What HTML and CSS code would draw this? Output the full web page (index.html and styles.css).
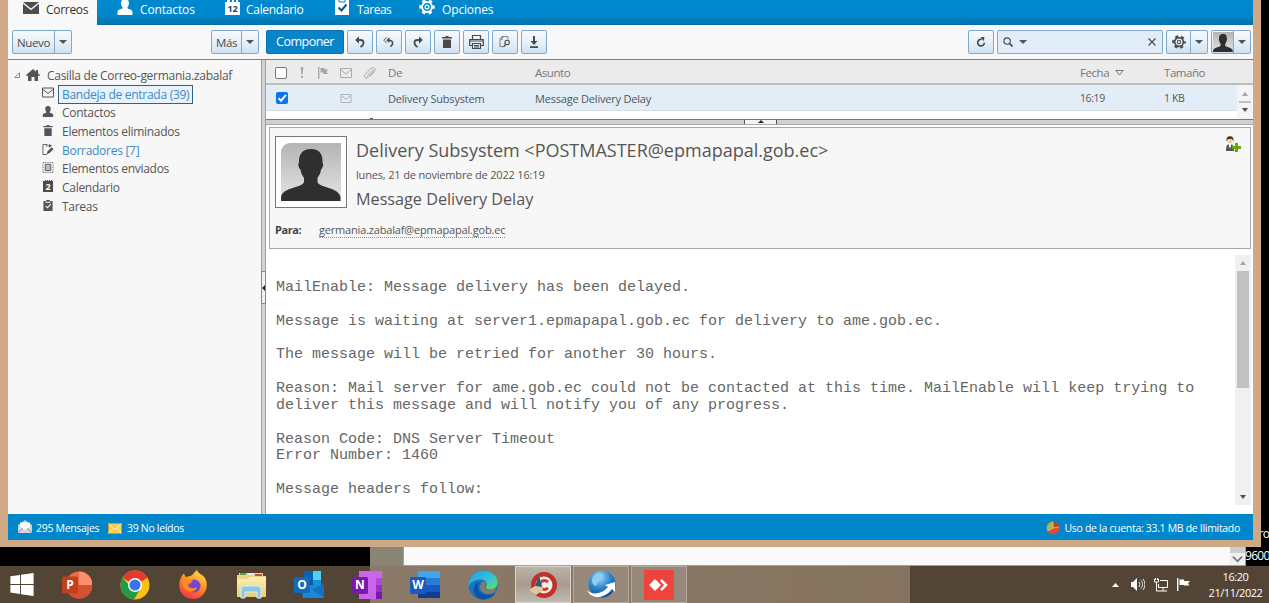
FILE: index.html
```html
<!DOCTYPE html>
<html lang="es">
<head>
<meta charset="utf-8">
<title>Correos</title>
<link rel="stylesheet" href="styles.css">
</head>
<body>
<svg class="defs" aria-hidden="true">
  <defs>
    <linearGradient id="av" x1="0" y1="0" x2="0" y2="1"><stop offset="0" stop-color="#b4b4b4"/><stop offset="1" stop-color="#e4e4e4"/></linearGradient>
    <linearGradient id="edge1" x1="0" y1="0" x2="1" y2="1"><stop offset="0" stop-color="#1b9de2"/><stop offset=".6" stop-color="#37c6d0"/><stop offset="1" stop-color="#6be04a"/></linearGradient>
    <radialGradient id="globe" cx=".4" cy=".25" r=".8"><stop offset="0" stop-color="#a9dcfa"/><stop offset=".5" stop-color="#2c88cf"/><stop offset="1" stop-color="#0c4687"/></radialGradient>
    <linearGradient id="fox" x1=".8" y1="0" x2=".3" y2="1"><stop offset="0" stop-color="#ffe14a"/><stop offset=".5" stop-color="#ff8a1e"/><stop offset="1" stop-color="#f4324f"/></linearGradient>
    <linearGradient id="folder" x1="0" y1="0" x2="0" y2="1"><stop offset="0" stop-color="#fbf0b4"/><stop offset="1" stop-color="#e9cd6c"/></linearGradient>
    <symbol id="mail" viewBox="0 0 12 10"><path d="M.5.5h11v9H.5zM.5 1.500 6 6l5.500-4.500" fill="none" stroke="currentColor"/></symbol>
    <symbol id="person" viewBox="0 0 12 12"><path d="M6 0c2.200 0 3 1.400 3 3.200C9 4.800 8 6.300 7.600 6.700c.4.800 4 .9 4 3V12H.4V9.700c0-2.100 3.600-2.200 4-3C4 6.300 3 4.800 3 3.200 3 1.400 3.800 0 6 0z" fill="currentColor"/></symbol>
    <symbol id="trash" viewBox="0 0 12 12"><path d="M1 1h3.500V0h3v1H11v1.500H1zM2 3.500h8V12H2z" fill="currentColor"/></symbol>
    <symbol id="gear" viewBox="0 0 16 16"><circle cx="8" cy="8" r="6.600" fill="none" stroke="currentColor" stroke-width="2.400" stroke-dasharray="3.400 3.510" stroke-dashoffset="1.700"/><circle cx="8" cy="8" r="5" fill="none" stroke="currentColor" stroke-width="1.900"/><circle cx="8" cy="8" r="1.900" fill="none" stroke="currentColor" stroke-width="1.200"/></symbol>
    <symbol id="reply" viewBox="0 0 12 12"><path d="M1.200 4 5 .3v7.400z" fill="currentColor"/><path d="M4 4h2.500C10.800 4.200 10.300 8.800 6.500 11" fill="none" stroke="currentColor" stroke-width="1.800"/></symbol>
    <symbol id="face" viewBox="0 0 60 59" preserveAspectRatio="none"><path fill="url(#av)" d="M0 0h60v59H0z"/><path d="M30 6c9 0 12 6 11.500 14 1.500 1 0 6-1.500 7-.5 5-3 7-3.500 9v4c3 6 21 5 23 15v4H0v-4c2-10 20-9 23-15v-4c-.5-2-3-4-3.500-9-1.500-1-3-6-1.500-7C17.500 12 21 6 30 6z" fill="#2f2f2f"/></symbol>
  </defs>
</svg>
<div class="desktop">
  <div class="watermark"><span class="edition">Pro</span><span class="build">9600</span></div>
  <div class="window">
    <nav class="tabs">
      <div class="tab active"><svg class="t-mail" viewBox="0 0 16 12"><path d="M0 0h16L8 6.500zM0 1.800l8 6.500 8-6.500V12H0z" fill="#4c4c4c"/></svg><span class="t1">Correos</span></div>
      <div class="tab c2"><svg class="t-person"><use href="#person"/></svg><span class="t2">Contactos</span></div>
      <div class="tab c3"><span class="cal-icon">12</span><span class="t3">Calendario</span></div>
      <div class="tab c4"><svg class="t-task" viewBox="0 0 14 17"><path d="M0 2h14v15H0z" fill="#fff"/><path d="M4 0h6v4H4z" fill="#fff" stroke="#0086cb"/><path d="m3.500 9.500 3 3 5-6" fill="none" stroke="#0b5a8c" stroke-width="2"/></svg><span class="t4">Tareas</span></div>
      <div class="tab c5"><svg class="t-gear"><use href="#gear"/></svg><span class="t5">Opciones</span></div>
    </nav>
    <div class="toolbar">
      <div class="btn nuevo"><span class="lab">Nuevo</span><span class="drop"><i class="caret"></i></span></div>
      <div class="btn mas"><span class="lab">Más</span><span class="drop"><i class="caret"></i></span></div>
      <div class="tools">
        <div class="compose">Componer</div>
        <div class="btn"><svg class="i12"><use href="#reply"/></svg></div>
        <div class="btn"><svg class="i12" viewBox="0 0 13 12"><path d="M3.500 4 7 .8v6.400z" fill="currentColor"/><path d="M6 4c5 0 6 4 2 7" fill="none" stroke="currentColor" stroke-width="1.600"/><path d="M4 .8.800 4 4 7.200" fill="none" stroke="currentColor"/></svg></div>
        <div class="btn"><svg class="i12 flip"><use href="#reply"/></svg></div>
        <div class="btn"><svg class="i12"><use href="#trash"/></svg></div>
        <div class="btn"><svg class="i15" viewBox="0 0 15 14"><path d="M3.500 4V.5h8V4M3 10.500H.7v-6h13.600v6H12M3.500 8.500h8v5h-8z" fill="none" stroke="currentColor" stroke-width="1.200"/><path d="M1 6h13M5 10.500h5M5 12h5" stroke="currentColor"/></svg></div>
        <div class="btn"><svg class="i12" viewBox="0 0 13 14"><path d="M5 12.500H.7V3L3 .7h7V4M3.500.7v3h-3" fill="none" stroke="currentColor" stroke-dasharray="2 .6"/><circle cx="9" cy="7.500" r="2.600" fill="none" stroke="currentColor" stroke-width="1.300"/><path d="M7.500 9.500 5 12.500" stroke="currentColor" stroke-width="1.600"/></svg></div>
        <div class="btn"><svg class="i12" viewBox="0 0 12 12"><path d="M5 0h2v5h2.500L6 9 2.500 5H5zM2 10.300h8V12H2z" fill="currentColor"/></svg></div>
      </div>
      <div class="right-tools">
        <div class="btn"><svg class="i10" viewBox="0 0 12 12"><path d="M7 2.800a4 4 0 1 0 3 4" fill="none" stroke="currentColor" stroke-width="2"/><path d="M5.500 0H10l-.5 5z" fill="currentColor"/></svg></div>
        <div class="search"><svg class="i10" viewBox="0 0 11 11"><circle cx="4.500" cy="4.500" r="3.500" fill="none" stroke="currentColor" stroke-width="1.200"/><path d="m7 7 3.500 3.500" stroke="currentColor" stroke-width="1.800"/></svg><i class="caret"></i><svg class="clear" viewBox="0 0 8 8"><path d="m.5.500 7 7m0-7-7 7" stroke="currentColor" stroke-width="1.200"/></svg></div>
        <div class="btn split"><svg class="i14"><use href="#gear"/></svg><span class="drop"><i class="caret"></i></span></div>
        <div class="btn split user"><svg class="mini"><use href="#face"/></svg><span class="drop"><i class="caret"></i></span></div>
      </div>
    </div>
    <div class="body">
      <aside class="tree">
        <div class="node root"><svg class="tri" viewBox="0 0 6 6"><path d="M5.500.7v4.800H.7z" fill="none" stroke="#888"/></svg><svg class="home" viewBox="0 0 14 12"><path d="M7 0l3 2.700V1h2v3.300L14 6v.700h-2V12H8.500V8h-3v4H2V6.700H0V6z" fill="currentColor"/></svg><span class="n0">Casilla de Correo-germania.zabalaf</span></div>
        <div class="node"><svg><use href="#mail"/></svg><span class="sel">Bandeja de entrada (39)</span></div>
        <div class="node"><svg><use href="#person"/></svg><span>Contactos</span></div>
        <div class="node"><svg><use href="#trash"/></svg><span>Elementos eliminados</span></div>
        <div class="node blue"><svg viewBox="0 0 12 12"><path d="M5 11.500H.5V.5h4.500l2 2M4.500.500V3" fill="none" stroke="currentColor"/><path d="m4.500 11 1-3 4.500-4.500L12 5.500 7.500 10zM7 0v4l3.500-2z" fill="currentColor"/></svg><span>Borradores [7]</span></div>
        <div class="node"><svg viewBox="0 0 12 12"><path d="M.5.500h11v11H.5z" fill="none" stroke="currentColor" stroke-dasharray="1 1"/><path d="M3 2.500h6v7H3z" fill="#bbb" stroke="currentColor"/></svg><span>Elementos enviados</span></div>
        <div class="node"><span class="mini-cal">2</span><span>Calendario</span></div>
        <div class="node"><svg viewBox="0 0 12 12"><path d="M1 1h10v11H1zM4 0h4v2H4z" fill="currentColor"/><path d="M4 1.500v1h4v-1M3.500 6.500l2 2L9 4.500" fill="none" stroke="#fff" stroke-width="1.200"/></svg><span>Tareas</span></div>
      </aside>
      <div class="vsplit"><span><i></i></span></div>
      <main class="main">
        <div class="list-head">
          <i class="check"></i>
          <svg class="h-bang" viewBox="0 0 4 11"><path d="M.7 0h2.600L2.700 7.500H1.300zM1 9h2v2H1z" fill="#a9a9a9"/></svg>
          <svg class="h-flag" viewBox="0 0 10 12"><path d="M.7 0v12" stroke="#aaa" stroke-width="1.400"/><path d="M2.500 1h4v1.500H10L8.500 5 10 7H5.500V5.500h-3z" fill="#a5a5a5"/></svg>
          <svg class="h-mail"><use href="#mail"/></svg>
          <svg class="h-clip" viewBox="0 0 13 12"><path d="M3.500 9.500 9 3.500c1-1 2.200.2 1.200 1.200L5 10.300c-2 2-5-.5-3.200-2.600L8 1.500c2.500-2.300 5.500.5 3.500 3L7 9.500" fill="none" stroke="#aaa"/></svg>
          <span class="col-de">De</span><span class="col-as">Asunto</span><span class="col-fe"><span>Fecha</span><svg viewBox="0 0 9 6"><path d="M.8.500h7.400L4.500 5z" fill="none" stroke="#777"/></svg></span><span class="col-ta">Tamaño</span>
        </div>
        <div class="rows">
          <div class="rows-in">
            <div class="row">
              <i class="check on"><svg viewBox="0 0 12 12"><path d="m2.500 6.300 2.500 2.500 5-6" fill="none" stroke="#fff" stroke-width="2"/></svg></i>
              <svg class="r-mail"><use href="#mail"/></svg>
              <span class="col-de">Delivery Subsystem</span><span class="col-as">Message Delivery Delay</span><span class="col-fe tight">16:19</span><span class="col-ta tight">1 KB</span>
            </div>
            <i class="dash"></i>
          </div>
          <div class="mini-scroll"><i class="up"></i><i class="bar"></i><i class="down"></i></div>
        </div>
        <div class="hsplit"><span><i></i></span></div>
        <section class="reader">
          <header class="card">
            <div class="top">
              <div class="photo"><svg><use href="#face"/></svg></div>
              <div class="who">
                <div class="from">Delivery Subsystem &lt;POSTMASTER@epmapapal.gob.ec&gt;</div>
                <div class="date">lunes, 21 de noviembre de 2022 16:19</div>
                <div class="subject">Message Delivery Delay</div>
              </div>
              <svg class="add" viewBox="0 0 16 16"><path d="M1 15c0-5 1-7 4-7s4 2 4 7z" fill="#555"/><path d="m3.500 8 1.500 5 1.500-5z" fill="#fff"/><circle cx="5" cy="4.500" r="3" fill="#f3d3a4"/><path d="M1.500 5C1 1.500 3 .2 5 .2S9 1.500 8.500 5L7 3H3z" fill="#4b3424"/><path d="M10 7h3v3h3v3h-3v3h-3v-3H7v-3h3z" fill="#69a51b"/></svg>
            </div>
            <div class="to"><b>Para:</b><span class="addr">germania.zabalaf@epmapapal.gob.ec</span></div>
          </header>
          <div class="message">
<pre>MailEnable: Message delivery has been delayed.

Message is waiting at server1.epmapapal.gob.ec for delivery to ame.gob.ec.

The message will be retried for another 30 hours.

Reason: Mail server for ame.gob.ec could not be contacted at this time. MailEnable will keep trying to
deliver this message and will notify you of any progress.

Reason Code: DNS Server Timeout
Error Number: 1460

Message headers follow:</pre>
            <div class="scroll"><i class="up"></i><i class="thumb"></i><i class="down"></i></div>
          </div>
        </section>
      </main>
    </div>
    <footer class="status">
      <svg class="s-open" viewBox="0 0 14 13"><path d="M0 5 7 0l7 5v8H0z" fill="#c7ced4"/><path d="M2 2.500h10V8l-5 2-5-2z" fill="#fff"/><path d="M0 5.500 7 10l7-4.500V13H0z" fill="#cfd6dc"/><path d="m0 12.500 5-4m9 4-5-4" stroke="#8d98a2"/></svg>
      <span class="s1">295 Mensajes</span>
      <svg class="s-closed" viewBox="0 0 14 11"><path d="M0 0h14v11H0z" fill="#f7cd53"/><path d="m0 .5 7 6 7-6M0 10.500l5-5m9 5-5-5" fill="none" stroke="#fff2bd"/><path d="M.5.5h13v10H.5z" fill="none" stroke="#d69b25"/></svg>
      <span>39 No leídos</span>
      <svg class="s-pie" viewBox="0 0 14 14"><circle cx="7" cy="7" r="6.500" fill="#d9502f"/><path d="M7 7V.500A6.500 6.500 0 0 0 1.500 10z" fill="#9cbb55"/><path d="M7 7V.500A6.500 6.500 0 0 1 13.400 6z" fill="#b9472c"/><path d="M7 7 1.500 10M7 7l6-1M7 7V1" stroke="#f3c7a5" stroke-width=".7"/></svg>
      <span>Uso de la cuenta: 33.1 MB de Ilimitado</span>
    </footer>
  </div>
  <div class="behind"><div class="pane"></div><div class="sheet"><div class="arrow-box"><svg viewBox="0 0 12 7"><path d="m1 1 5 5 5-5" fill="none" stroke="#777" stroke-width="2"/></svg></div></div></div>
  <div class="taskbar">
    <div class="app"><svg viewBox="0 0 30 30"><path d="m3 6.500 10-1.400v9.300H3zM14 5l13-2v11.400H14zM3 15.500h10v9.300L3 23.400zM14 15.500h13V27l-13-2z" fill="#fff"/></svg></div>
    <div class="app"><svg viewBox="0 0 30 30"><circle cx="17" cy="15" r="13.500" fill="#ed6c47"/><path d="M17 1.500A13.500 13.500 0 0 1 30.500 15H17z" fill="#ff8f6b"/><path d="M3.500 15h27a13.500 13.500 0 0 1-27 0z" fill="#d35230"/><rect y="6.500" width="16" height="17" rx="1.500" fill="#c43e1c"/></svg><b>P</b></div>
    <div class="app"><svg viewBox="0 0 30 30"><circle cx="15" cy="15" r="14.500" fill="#fbc116"/><path d="M15 15 2.400 7.700A14.500 14.500 0 0 1 27.600 7.700z" fill="#e33b2e"/><path d="M2.400 7.700A14.500 14.500 0 0 0 14 29.500l6.600-11.200L15 15H9z" fill="#229a48"/><circle cx="15" cy="15" r="7" fill="#fff"/><circle cx="15" cy="15" r="5.600" fill="#3378e6"/></svg></div>
    <div class="app"><svg viewBox="0 0 30 30"><path d="M19 0c1 4 6 4 8.500 9 4 9-2 20-12.500 20C5 29 0 21 1.500 12 2 9 4 5 6 3.500L7.500 7l5-1C15 5 16 2 19 0z" fill="url(#fox)"/><circle cx="16" cy="16" r="6.500" fill="#7545d6"/><path d="M5 10c3-2 7 0 10 1-1 2-4 2-5 4 1 4 6 4 9 2-1 6-11 7-14-1z" fill="#ff8a1e"/></svg></div>
    <div class="app"><svg viewBox="0 0 30 30"><path d="M1 5h2V3h9v2h4V3h11v3h3v20H1z" fill="#ecd48a"/><path d="M4 3h6v2H4z" fill="#5ba33f"/><path d="M12 3h6v2h-6z" fill="#e6efe8"/><path d="M19 4h7v2h-7z" fill="#c65138"/><path d="M1 9h11l2-2h16v20H1z" fill="url(#folder)"/><path d="M5 28v-9c0-2 2-3 4-3h12c2 0 4 1 4 3v9h-4v-6H9v6z" fill="#8dc6e5" stroke="#d7eef9"/></svg></div>
    <div class="app"><svg viewBox="0 0 30 30"><path d="M10 1h17v18H10z" fill="#1490df"/><path d="M10 1h9v9h-9z" fill="#0a62b5"/><path d="M19 1h8v9h-8z" fill="#50d0f7"/><path d="M10 10h9v8h-9z" fill="#0b58a3"/><path d="M7 15h23v13H9z" fill="#1a87d8"/><path d="m7 15 23 13V15L18 21z" fill="#28a9ea"/><path d="M30 14v14L17 20z" fill="#1471bf"/><rect y="7" width="16" height="16" rx="1.500" fill="#0f6cbd"/></svg><b>O</b></div>
    <div class="app"><svg viewBox="0 0 30 30"><path d="M7 1h23v28H7z" fill="#ca64ea"/><path d="M24 8h6v7h-6z" fill="#ae4bd5"/><path d="M24 15h6v7h-6z" fill="#9332bf"/><path d="M24 22h6v7h-6z" fill="#7719aa"/><rect y="7" width="16" height="17" rx="1.500" fill="#7719aa"/></svg><b>N</b></div>
    <div class="app"><svg viewBox="0 0 30 30"><path d="M8 1h22v7H8z" fill="#41a5ee"/><path d="M8 8h22v7H8z" fill="#2b7cd3"/><path d="M8 15h22v7H8z" fill="#185abd"/><path d="M8 22h22v6H8z" fill="#103f91"/><rect y="7" width="16" height="17" rx="1.500" fill="#185abd"/></svg><b>W</b></div>
    <div class="app"><svg viewBox="0 0 30 30"><circle cx="15" cy="15" r="14.500" fill="#1573c4"/><path d="M.6 14C2 5 8 .5 15 .5c9 0 14.500 6 14.500 12 0 5-4 7-7.500 7-3 0-5-1-4-2.500 2-3 0-7.500-5-7.500C7 9.500 2 12 .6 17z" fill="url(#edge1)"/><path d="M12 12c-4 3-3 12 7 13 4 .3 7-1 8.500-2C25 27 20 29.500 15 29.500 8 29 5 23 6 18c1-4 3-6 6-6z" fill="#0c53a2"/><path d="M17 17c1.500-2 1-4-1-6l-3 2-1 4c0 4 4 7 8 7 3 0 6-1 7-3l2-5c-2 3-4 3.500-7 3.500s-6-.5-5-2.500z" fill="#8b7a68"/></svg></div>
    <div class="app task current"><svg viewBox="0 0 30 30"><circle cx="16" cy="15" r="13" fill="#c22f27"/><circle cx="16" cy="15" r="8.500" fill="#f1eee9"/><path d="M20 12c-4-3-8-1-8 3s4 6 8 3" fill="none" stroke="#d13a31" stroke-width="3"/><path d="m11 5-1 9-9 6 7 5 7-5z" fill="#dfc7a0"/><path d="m11 5-4 11 7 1z" fill="#2b5c7c"/></svg></div>
    <div class="app task"><svg viewBox="0 0 30 30"><circle cx="16" cy="14" r="13.500" fill="url(#globe)"/><path d="M10 4c5-2 8 0 7 3s-5 3-6 7-5 0-5-3 1-5 4-7z" fill="#8ecdf2"/><path d="M1 20c4 5 14 5 21-3l-3-2 10-3v10l-3-3C19 29 5 30 1 20z" fill="#fff"/></svg></div>
    <div class="app task"><svg viewBox="0 0 30 30"><path d="M0 0h30v30H0z" fill="#ef443b"/><path d="m11 9 6 6-6 6-6-6z" fill="#fff"/><path d="m17 10 5 5-5 5" fill="none" stroke="#fff" stroke-width="2.500"/></svg></div>
    <div class="tray">
      <svg class="y1" viewBox="0 0 7 4"><path d="M0 4 3.500 0 7 4z" fill="#fff"/></svg>
      <svg class="y2" viewBox="0 0 14 13"><path d="M0 4h2l4-4v13L2 9H0z" fill="#fff"/><path d="M8 4c1 1.500 1 3.500 0 5M10 2.500c2 2 2 6 0 8M12 1c2.500 3 2.500 8 0 11" fill="none" stroke="#eee"/></svg>
      <svg class="y3" viewBox="0 0 14 14"><path d="M6 2.500h7.500v7H4.500V6M9 10v3M5 13h8M.5 1v3h4V1M2.500 4v9H5M1.500 0v2M3.500 0v2" fill="none" stroke="#fff"/></svg>
      <svg class="y4" viewBox="0 0 13 13"><path d="M.7 0v13" stroke="#fff" stroke-width="1.400"/><path d="M2.500 1.500H7V3h6l-2 2.500 1.500 2H7V7H2.500z" fill="#fff"/></svg>
      <div class="clock"><span>16:20</span><span>21/11/2022</span></div>
    </div>
  </div>
</div>
</body>
</html>
```
FILE: styles.css
```css
* { box-sizing: border-box; }
body { margin: 0; background: #000; overflow: hidden; }
body, .desktop { font-family: "Open Sans", "Noto Sans", sans-serif; }
svg { display: block; flex: none; }
i { font-style: normal; display: block; flex: none; }
span, b { white-space: nowrap; }
.defs { position: absolute; width: 0; height: 0; }
.desktop { width: 1269px; height: 603px; position: relative; background: #000; display: flex; flex-direction: column; overflow: hidden; }
.watermark { position: absolute; left: 1245px; top: 523px; width: 24px; color: #fff; font-size: 12px; line-height: 22px; display: flex; flex-direction: column; letter-spacing: -.7px; z-index: 1; }
.edition { padding-left: 7px; }
.window { width: 1261px; height: 547px; border: solid #cfa986; border-width: 0 8px 7px; display: flex; flex-direction: column; position: relative; z-index: 2; flex: none; }

.tabs { height: 25px; background: linear-gradient(#0089ce, #0087cb 60%, #0070a9); display: flex; color: #fff; font-size: 12px; line-height: 19px; letter-spacing: -.15px; flex: none; }
.tab { display: flex; }
.tab.active { width: 89px; background: #f8f8f8; color: #333; padding-left: 15px; }
.active .t1 { margin-left: 7px; letter-spacing: -.3px; }
.t-mail { width: 16px; height: 12px; margin-top: 2px; }
.c2 { width: 117px; padding-left: 20px; }
.t-person { width: 16px; height: 16px; margin-top: -1px; }
.t2 { margin-left: 7px; }
.c3 { width: 121px; padding-left: 11px; }
.cal-icon { width: 15px; height: 15px; background: #fff; border-top: 2px dotted #0086cb; color: #124c70; font: bold 9px/13px "Open Sans", sans-serif; text-align: center; }
.t3 { margin-left: 6px; letter-spacing: -.3px; }
.c4 { width: 69px; }
.t-task { width: 14px; height: 17px; margin-top: -2px; }
.t4 { margin-left: 8px; letter-spacing: -.5px; }
.c5 { padding-left: 15px; }
.t-gear { width: 16px; height: 16px; margin-top: -1px; }
.t5 { margin-left: 7px; }

.toolbar { height: 35px; background: #f8f8f8; border-bottom: 1px solid #7d7d7d; padding: 5px 2px 0 4px; display: flex; flex: none; color: #4a4a4a; }
.btn { width: 26px; height: 24px; border: 1px solid #7eaacd; border-radius: 2px; background: linear-gradient(#f6fafd, #e6f0f9 50%, #cfe2f2); display: flex; align-items: center; justify-content: center; flex: none; font-size: 11.500px; letter-spacing: -.4px; }
.drop { width: 17px; align-self: stretch; border-left: 1px solid #7eaacd; display: flex; align-items: center; justify-content: center; }
.lab { flex: 1; text-align: center; padding-top: 1px; }
.caret { width: 0; height: 0; border: solid transparent; border-width: 4px 4px 0; border-top-color: #555; }
.nuevo { width: 60px; }
.mas { width: 48px; margin-left: 139px; }
.tools { display: flex; gap: 3px; margin-left: 7px; }
.compose { width: 78px; height: 24px; background: #0a84c8; border: 1px solid #0873ae; border-radius: 2px; color: #fff; font-size: 12.500px; letter-spacing: -.5px; line-height: 22px; text-align: center; }
.i12 { width: 12px; height: 12px; }
.i14 { width: 14px; height: 14px; }
.i15 { width: 15px; height: 14px; }
.i10 { width: 10px; height: 10px; }
.flip { transform: scaleX(-1); }
.right-tools { margin-left: auto; display: flex; gap: 3px; }
.search { width: 166px; height: 24px; border: 1px solid #7eaacd; border-radius: 2px; background: #e1eef9; display: flex; align-items: center; padding: 0 6px 0 5px; gap: 6px; }
.clear { width: 8px; height: 8px; margin-left: auto; }
.split { width: 42px; justify-content: space-between; padding-left: 5px; }
.user { width: 40px; padding-left: 1px; }
.mini { width: 20px; height: 20px; }

.body { height: 454px; display: flex; flex: none; }
.tree { width: 253px; background: #f7f7f7; padding: 6.600px 0 0 34px; color: #555; font-size: 12px; letter-spacing: -.28px; line-height: 18.750px; flex: none; }
.node { height: 18.750px; display: flex; }
.node > svg { width: 12px; height: 11px; margin: 2px 8px 0 0; }
.node.root { margin-left: -28px; }
.root > .tri { width: 6px; height: 6px; margin: 5px 6px 0 0; }
.root > .home { width: 14px; height: 12px; margin: 2px 7px 0 0; }
.node > .sel { height: 19px; margin: 0 0 0 -4px; padding: 0 3px; background: #e8f2fb; border: 1px solid #2f6286; color: #3c8ac4; line-height: 17px; }
.blue > span { color: #3c8ac4; }
.mini-cal { width: 10px; height: 12px; margin: 1px 9px 0 1px; background: #4c4c4c; color: #fff; font: bold 9px/12px "Open Sans", sans-serif; text-align: center; border-top: 1px dotted #f7f7f7; }
.vsplit { width: 5px; background: #d2d2d2; border: solid #a0a0a0; border-width: 0 1px; padding-top: 211px; flex: none; }
.vsplit span { display: flex; align-items: center; height: 33px; width: 5px; margin-left: -1px; background: #f0f0f0; border: 1px solid #888; }
.vsplit i { width: 0; height: 0; border: solid transparent; border-width: 3px 3px 3px 0; border-right-color: #222; }

.main { flex: 1; min-width: 0; background: #fff; display: flex; flex-direction: column; }
.list-head { height: 25px; background: #ebebeb; border-bottom: 2px solid #bcbcbc; display: flex; align-items: center; padding: 2px 0 0 9px; color: #777; font-size: 11.500px; letter-spacing: -.45px; flex: none; }
.check { width: 12px; height: 12px; border: 1px solid #777; border-radius: 2px; background: #fff; }
.check.on { background: #0a74e8; border: 0; }
.h-bang { width: 4px; height: 11px; margin-left: 13px; }
.h-flag { width: 10px; height: 12px; margin-left: 14px; }
.h-mail { width: 12px; height: 10px; margin-left: 12px; color: #aaa; }
.h-clip { width: 13px; height: 12px; margin-left: 11px; }
.list-head .col-de { margin-left: 12px; }
.col-de { width: 147px; }
.col-as { width: 545px; }
.col-fe { width: 84px; display: flex; align-items: center; gap: 6px; }
.col-fe svg { width: 9px; height: 6px; }
.rows { height: 34px; display: flex; flex: none; }
.rows-in { flex: 1; }
.row { height: 26px; background: #e2edf7; border-bottom: 1px solid #d8dde1; display: flex; align-items: center; padding: 1px 0 0 10px; color: #555; font-size: 11px; letter-spacing: -.2px; }
.row .tight { font-size: 10.500px; letter-spacing: -.4px; }
.r-mail { width: 12px; height: 9px; margin-left: 52px; color: #aab; }
.row .col-de { margin-left: 36px; }
.dash { width: 3px; height: 1px; margin: 7px 0 0 104px; background: #2f5f80; }
.mini-scroll { width: 16px; background: #f4f4f4; display: flex; flex-direction: column; align-items: center; padding: 7px 0 0; gap: 5px; }
.up, .down { width: 0; height: 0; border: solid transparent; }
.up { border-width: 0 3.500px 4px; border-bottom-color: #a3a3a3; }
.down { border-width: 4px 3.500px 0; border-top-color: #505050; }
.bar { width: 12px; height: 2px; background: #c0c0c0; }
.hsplit { height: 6px; background: #d0d0d0; border-top: 1px solid #777; border-bottom: 1px solid #a8a8a8; padding-left: 478px; flex: none; }
.hsplit span { display: flex; justify-content: center; width: 33px; height: 4px; background: #f4f4f4; border: solid #555; border-width: 0 1px; }
.hsplit i { width: 0; height: 0; border: solid transparent; border-width: 0 3px 3px; border-bottom-color: #222; }
.reader { flex: 1; padding: 2px 2px 0 3px; }
.card { height: 122px; border: 1px solid #a8a8a8; background: #f7f7f7; color: #555; padding: 8px 9px 0 5px; }
.top { display: flex; }
.photo { width: 72px; height: 72px; border: 1px solid #777; background: #fff; padding: 6px 5px; }
.photo svg { width: 60px; height: 58px; border-top-left-radius: 9px; }
.who { margin-left: 9px; white-space: nowrap; }
.from { font-size: 18px; line-height: 28px; }
.date { font-size: 11px; line-height: 22px; letter-spacing: -.17px; }
.subject { font-size: 16.200px; line-height: 27px; }
.add { width: 16px; height: 16px; margin-left: auto; }
.to { display: flex; font-size: 11px; line-height: 14px; margin-top: 10px; letter-spacing: -.18px; }
.to b { width: 44px; letter-spacing: -.4px; color: #444; }
.addr { border-bottom: 1px dotted #6b9bc0; height: 15px; }
.message { display: flex; padding: 6px 0 0 7px; height: 257px; }
.message pre { margin: 25px 0 0; font: 15px/16.850px "Liberation Mono", monospace; color: #666; flex: 1; }
.scroll { width: 16px; height: 250px; background: #f0f0f0; display: flex; flex-direction: column; align-items: center; padding: 6px 0; flex: none; }
.scroll .down { margin-top: auto; }
.thumb { width: 12px; height: 117px; background: #c1c1c1; margin-top: 6px; }

.status { height: 26px; background: #0086cb; color: #fff; font-size: 10.500px; letter-spacing: -.31px; display: flex; align-items: center; padding: 2px 13px 0 10px; flex: none; }
.s-open { width: 14px; height: 13px; margin-right: 4px; margin-bottom: 3px; }
.s1 { width: 72px; }
.s-closed { width: 14px; height: 11px; margin-right: 5px; }
.s-pie { width: 14px; height: 14px; margin: 0 5px 0 auto; }

.behind { height: 19px; display: flex; padding-left: 370px; flex: none; }
.pane { width: 33px; background: #8a8474; }
.sheet { width: 843px; background: #fafafa; border: 1px solid #d8897d; border-top: 0; display: flex; justify-content: flex-end; }
.arrow-box { width: 15px; border-top: 6px solid #cdcdcd; background: #f0f0f0; display: flex; justify-content: center; align-items: center; }
.sheet svg { width: 11px; height: 8px; }
.taskbar { height: 37px; background: linear-gradient(90deg, #524536 370px, #8b7a69 370px, #85735f 910px, #524536 910px); display: flex; flex: none; }
.app { width: 58px; height: 37px; flex: none; display: flex; align-items: center; justify-content: center; position: relative; }
.app svg { width: 30px; height: 30px; }
.app:first-child { width: 48px; }
.app:first-child svg { height: 29px; margin-left: -4px; }
.app b { position: absolute; left: 14px; top: 10px; width: 16px; text-align: center; color: #fff; font-size: 12px; line-height: 17px; }
.app.task { width: 56px; margin-right: 2px; border: 1px solid #b8aa9b; background: #96897b; }
.app.task:nth-child(10) { margin-left: 3px; }
.app.current { background: linear-gradient(#bcb2a8, #a89b8f 50%, #c0b8ae); border-color: #ddd5cc; }
.tray { display: flex; margin-left: auto; align-items: center; padding-right: 6px; }
.y1 { width: 7px; height: 4px; margin-right: 12px; }
.y2 { width: 14px; height: 13px; margin-right: 9px; }
.y3 { width: 14px; height: 14px; margin-right: 9px; }
.y4 { width: 13px; height: 13px; margin-right: 18px; }
.clock { width: 55px; display: flex; flex-direction: column; align-items: center; color: #fff; font-size: 11px; line-height: 16px; letter-spacing: -.45px; }
```
